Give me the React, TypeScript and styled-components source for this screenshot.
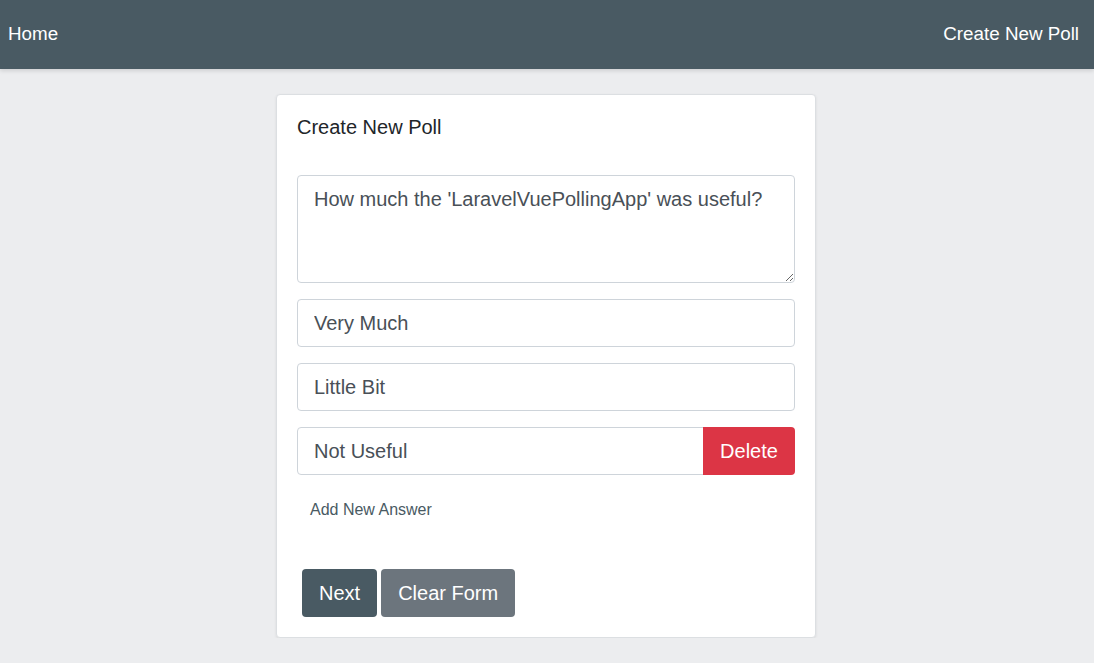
import React from "react";
import styled, { createGlobalStyle } from "styled-components";

const Global = createGlobalStyle`
  html, body { margin: 0; padding: 0; }
  body {
    background: #ecedef;
    font-family: "Liberation Sans", Arial, sans-serif;
    color: #212529;
  }
  * { box-sizing: border-box; }
`;

const NavBar = styled.nav`
  height: 69px;
  background: #495a63;
  display: flex;
  align-items: center;
  justify-content: space-between;
  padding: 0 15px 0 8px;
  box-shadow: 0 2px 4px rgba(0, 0, 0, 0.12);
`;

const NavLink = styled.a`
  color: #ffffff;
  font-size: 18.8px;
  text-decoration: none;
  margin-top: -2px;
`;

const Main = styled.main`
  display: flex;
  justify-content: center;
  padding: 25px 2px 0 0;
`;

const Card = styled.section`
  width: 540px;
  background: #ffffff;
  border: 1px solid #dcdfe2;
  border-radius: 4px;
  padding: 20px;
  box-shadow: 0 1px 3px rgba(0, 0, 0, 0.08);
  display: flex;
  flex-direction: column;
`;

const Title = styled.h1`
  margin: 0 0 36px;
  font-size: 20px;
  font-weight: 400;
  line-height: 24px;
  color: #212529;
`;

const Fields = styled.div`
  display: flex;
  flex-direction: column;
  gap: 16px;
`;

const fieldCss = `
  width: 100%;
  font-family: "Liberation Sans", Arial, sans-serif;
  font-size: 20px;
  color: #495057;
  border: 1px solid #ced4da;
  border-radius: 4px;
  background: #fff;
  padding: 0 16px;
  outline: none;
`;

const Question = styled.textarea`
  ${fieldCss}
  height: 108px;
  padding-top: 11px;
  line-height: 24px;
  resize: vertical;
  display: block;
`;

const Answer = styled.input<{ $grouped?: boolean }>`
  ${fieldCss}
  height: 48px;
  ${(p) => (p.$grouped ? "border-top-right-radius: 0; border-bottom-right-radius: 0; flex: 1;" : "")}
`;

const Group = styled.div`
  display: flex;
`;

const Button = styled.button<{ $variant: "danger" | "primary" | "secondary" }>`
  height: 48px;
  border: none;
  border-radius: 4px;
  color: #fff;
  font-family: "Liberation Sans", Arial, sans-serif;
  font-size: 20px;
  padding: 0 17px;
  cursor: pointer;
  background: ${(p) =>
    p.$variant === "danger" ? "#dc3545" : p.$variant === "primary" ? "#495a63" : "#6c757d"};
`;

const DeleteButton = styled(Button)`
  width: 92px;
  border-top-left-radius: 0;
  border-bottom-left-radius: 0;
  margin-left: -1px;
`;

const AddLink = styled.button`
  align-self: flex-start;
  background: none;
  border: none;
  font-family: "Liberation Sans", Arial, sans-serif;
  font-size: 16px;
  color: #495a63;
  padding: 0 13px;
  margin: 25px 0 49px;
  line-height: 20px;
  cursor: pointer;
`;

const Actions = styled.div`
  display: flex;
  gap: 4px;
  padding-left: 5px;
`;

export default function App() {
  return (
    <>
      <Global />
      <NavBar>
        <NavLink href="#">Home</NavLink>
        <NavLink href="#">Create New Poll</NavLink>
      </NavBar>
      <Main>
        <Card>
          <Title>Create New Poll</Title>
          <Fields>
            <Question defaultValue="How much the 'LaravelVuePollingApp' was useful?" />
            <Answer defaultValue="Very Much" />
            <Answer defaultValue="Little Bit" />
            <Group>
              <Answer $grouped defaultValue="Not Useful" />
              <DeleteButton $variant="danger">Delete</DeleteButton>
            </Group>
          </Fields>
          <AddLink>Add New Answer</AddLink>
          <Actions>
            <Button $variant="primary">Next</Button>
            <Button $variant="secondary">Clear Form</Button>
          </Actions>
        </Card>
      </Main>
    </>
  );
}
